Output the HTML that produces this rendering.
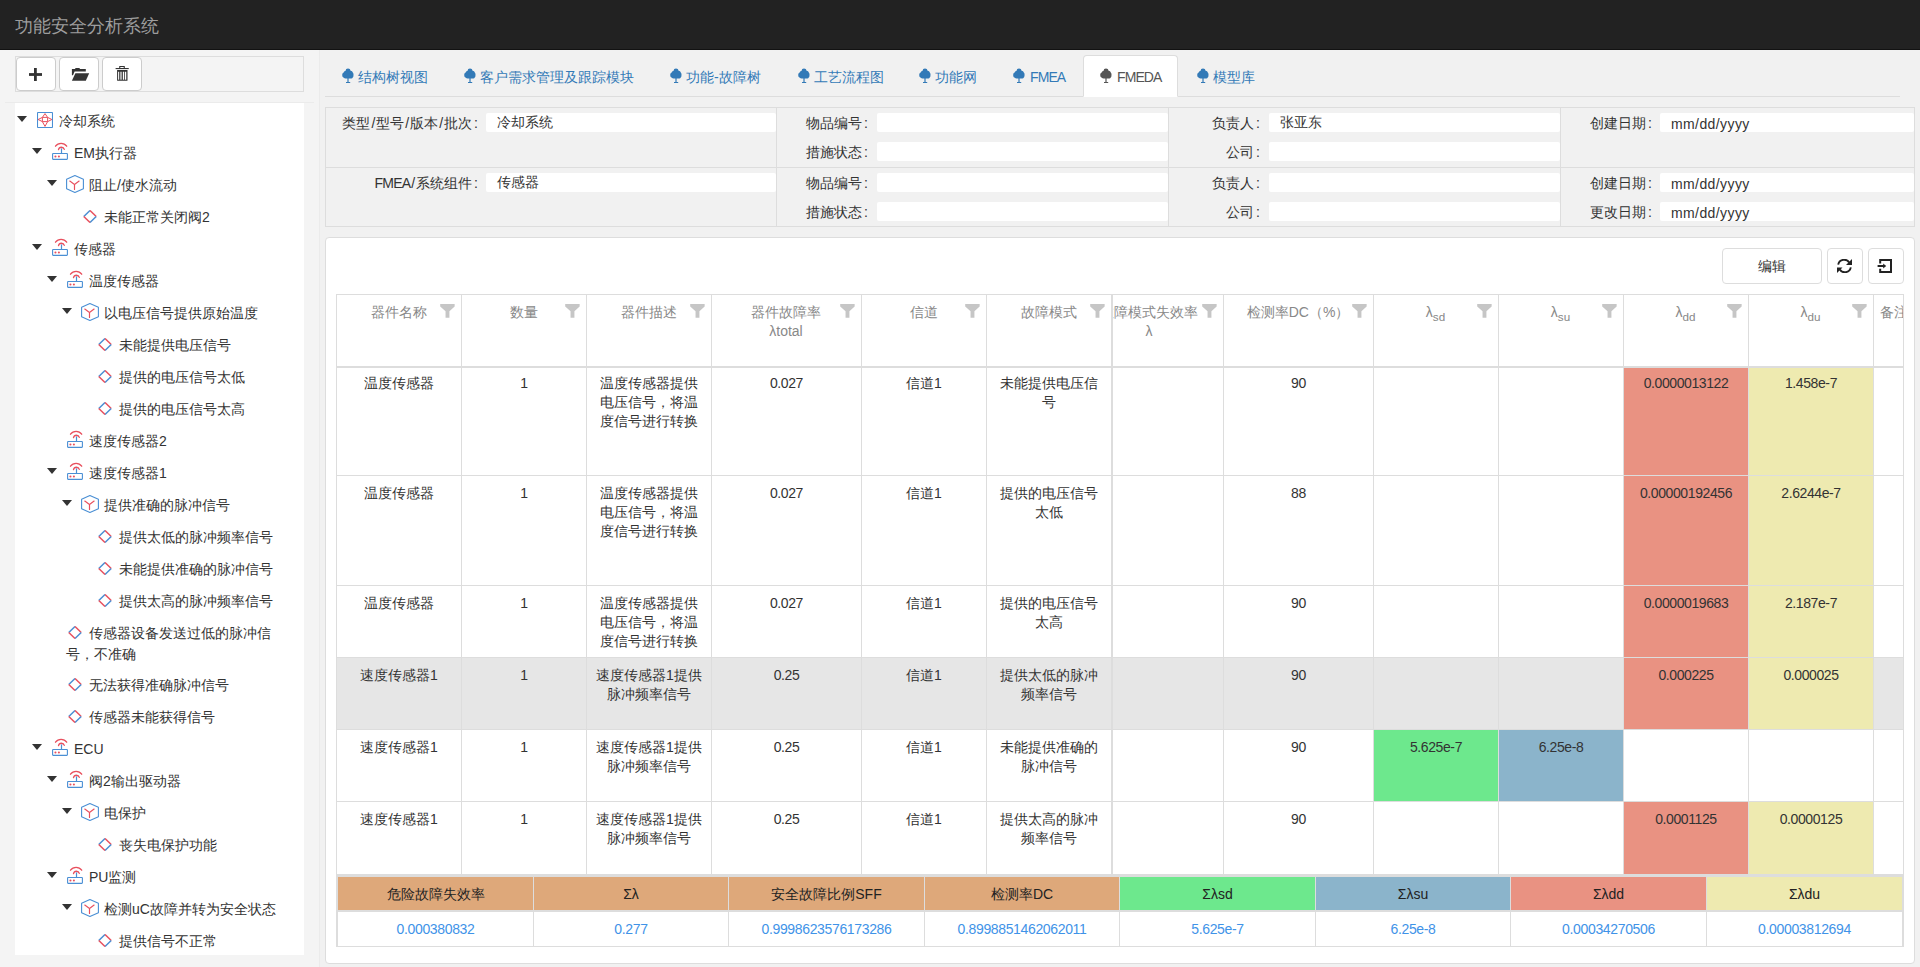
<!DOCTYPE html><html><head><meta charset="utf-8"><title>功能安全分析系统</title><style>
*{box-sizing:border-box;margin:0;padding:0}
html,body{width:1920px;height:967px;overflow:hidden;background:#f1f1f1;font-family:"Liberation Sans",sans-serif;font-size:14px;color:#333}
.a{position:absolute}
.hdr{left:0;top:0;width:1920px;height:50px;background:#222;border-bottom:1px solid #121212}
.brand{left:15px;top:16px;font-size:18px;line-height:20px;color:#9d9d9d;white-space:nowrap}
.lp{left:0;top:50px;width:320px;height:917px;background:#f4f4f4;border-right:1px solid #ebebeb}
.tb{left:15px;top:56px;width:289px;height:36px;border:1px solid #ddd;background:#f4f4f4}
.btn{top:57px;width:40px;height:34px;background:#fff;border:1px solid #ccc;border-radius:4px}
.tree{left:15px;top:103px;width:289px;height:852px;background:#fff}
.node{white-space:nowrap;line-height:20px;font-size:14px;color:#333}
.tabs{left:325px;top:96px;width:1575px;height:1px;background:#ddd}
.tab{top:55px;height:42px;color:#337ab7;white-space:nowrap;line-height:20px}
.form{left:325px;top:107px;width:1590px;height:120px;border:1px solid #ddd}
.lbl{line-height:20px;text-align:right;white-space:nowrap;color:#333}
.sl{margin:0 1px}.co{margin:0 0 0 2px}
.inp{height:19px;background:#fff;border-radius:2px}
.panel{left:325px;top:237px;width:1590px;height:727px;background:#fff;border:1px solid #ddd;border-radius:4px}
.hl{height:1px;background:#ddd}
.vl{width:1px;background:#ddd}
.cell{text-align:center;line-height:19px;overflow:hidden}
.th{color:#888;text-align:center;line-height:19px;white-space:nowrap}
</style></head><body>
<div class="a hdr"></div><div class="a brand">功能安全分析系统</div>
<div class="a lp"></div>
<div class="a tb"></div>
<div class="a btn" style="left:16px"></div>
<div class="a btn" style="left:59px"></div>
<div class="a btn" style="left:102px"></div>
<svg class="a" style="left:29px;top:68px" width="13" height="13" viewBox="0 0 13 13"><rect x="5" y="0" width="2.8" height="13" fill="#333"/><rect x="0" y="5.1" width="13" height="2.8" fill="#333"/></svg>
<svg class="a" style="left:71px;top:67px" width="19" height="15" viewBox="0 0 19 15"><path d="M0.9 2 H4 L4.6 1 H8.4 L9 2 H14.8 V4.5 H3.6 L2 8.2 H0.9 Z" fill="#333"/><path d="M4.4 6.2 H18.2 L14.8 13.7 H0.9 Z" fill="#333"/></svg>
<svg class="a" style="left:115px;top:65px" width="15" height="17" viewBox="0 0 15 17"><rect x="0.6" y="3" width="13.15" height="1.1" fill="#333"/><path d="M4.2 3 V1.2 Q4.2 0.9 4.5 0.9 H9.5 Q9.8 0.9 9.8 1.2 V3 H8.7 V2 H5.3 V3 Z" fill="#333"/><path d="M2.1 5.1 H12.5 V15.2 Q12.5 15.7 12 15.7 H2.6 Q2.1 15.7 2.1 15.2 Z" fill="#333"/><rect x="3.1" y="6.75" width="1.1" height="7.95" fill="#fff"/><rect x="5" y="6.75" width="2.1" height="7.95" fill="#aaa"/><rect x="7.9" y="6.75" width="1.3" height="7.95" fill="#fff"/><rect x="10" y="6.75" width="1.25" height="7.95" fill="#fff"/></svg>
<div class="a" style="left:5px;top:102px;width:309px;height:1px;background:#ebebeb"></div>
<div class="a tree"></div>
<svg class="a" style="left:17px;top:116px" width="10" height="6" viewBox="0 0 10 6"><path d="M0 0 H10 L5 6 Z" fill="#333"/></svg>
<svg class="a" style="left:37px;top:112px" width="16" height="16" viewBox="0 0 16 16"><rect x="0.5" y="0.5" width="15" height="15" rx="0.8" fill="none" stroke="#4a8fd4" stroke-width="1.1"/><path d="M8 1.6 L10.6 5.4 L14.9 7.5 L10.6 9.6 L8 14.4 L5.4 9.6 L1.1 7.5 L5.4 5.4 Z M5.4 5.4 H10.6 V9.6 H5.4 Z" fill="none" stroke="#e8505e" stroke-width="1" stroke-linejoin="round"/></svg>
<div class="a node" style="left:59px;top:111px">冷却系统</div>
<svg class="a" style="left:32px;top:148px" width="10" height="6" viewBox="0 0 10 6"><path d="M0 0 H10 L5 6 Z" fill="#333"/></svg>
<svg class="a" style="left:52px;top:142px" width="17" height="19" viewBox="0 0 17 19"><path d="M3.5 4.2 A6.9 6.9 0 0 1 14.7 4.2" fill="none" stroke="#e8505e" stroke-width="1.3" stroke-linecap="round"/><path d="M6.5 7.6 A3 3 0 0 1 12.3 7.4" fill="none" stroke="#e8505e" stroke-width="1.3" stroke-linecap="round"/><rect x="8.9" y="6.4" width="1.2" height="5" fill="#4a8fd4"/><rect x="0.6" y="11.5" width="14.8" height="5.9" rx="0.6" fill="none" stroke="#4a8fd4" stroke-width="1.1"/><circle cx="3.45" cy="14.45" r="1.05" fill="#e8505e"/><circle cx="6.9" cy="14.45" r="1.05" fill="#e8505e"/></svg>
<div class="a node" style="left:74px;top:143px">EM执行器</div>
<svg class="a" style="left:47px;top:180px" width="10" height="6" viewBox="0 0 10 6"><path d="M0 0 H10 L5 6 Z" fill="#333"/></svg>
<svg class="a" style="left:66px;top:175px" width="18" height="18" viewBox="0 0 18 18"><path d="M8.9 0.6 L17.4 4.3 V13.7 L8.9 17.4 L0.6 13.7 V4.3 Z" fill="none" stroke="#4a8fd4" stroke-width="1.1" stroke-linejoin="round"/><path d="M3.8 6.1 L8.5 9.4 L13.1 6.1 M8.5 9.4 V14.5" fill="none" stroke="#e8505e" stroke-width="1.2" stroke-linecap="round"/></svg>
<div class="a node" style="left:89px;top:175px">阻止/使水流动</div>
<svg class="a" style="left:83px;top:210px" width="14" height="14" viewBox="0 0 14 14"><path d="M0.8 6.5 L7 0.5" stroke="#4a8fd4" stroke-width="1.5"/><path d="M7 0.5 L13.2 6.5" stroke="#e8505e" stroke-width="1.5"/><path d="M13.2 6.5 L7 12.5" stroke="#4a8fd4" stroke-width="1.5"/><path d="M7 12.5 L0.8 6.5" stroke="#e8505e" stroke-width="1.5"/></svg>
<div class="a node" style="left:104px;top:207px">未能正常关闭阀2</div>
<svg class="a" style="left:32px;top:244px" width="10" height="6" viewBox="0 0 10 6"><path d="M0 0 H10 L5 6 Z" fill="#333"/></svg>
<svg class="a" style="left:52px;top:238px" width="17" height="19" viewBox="0 0 17 19"><path d="M3.5 4.2 A6.9 6.9 0 0 1 14.7 4.2" fill="none" stroke="#e8505e" stroke-width="1.3" stroke-linecap="round"/><path d="M6.5 7.6 A3 3 0 0 1 12.3 7.4" fill="none" stroke="#e8505e" stroke-width="1.3" stroke-linecap="round"/><rect x="8.9" y="6.4" width="1.2" height="5" fill="#4a8fd4"/><rect x="0.6" y="11.5" width="14.8" height="5.9" rx="0.6" fill="none" stroke="#4a8fd4" stroke-width="1.1"/><circle cx="3.45" cy="14.45" r="1.05" fill="#e8505e"/><circle cx="6.9" cy="14.45" r="1.05" fill="#e8505e"/></svg>
<div class="a node" style="left:74px;top:239px">传感器</div>
<svg class="a" style="left:47px;top:276px" width="10" height="6" viewBox="0 0 10 6"><path d="M0 0 H10 L5 6 Z" fill="#333"/></svg>
<svg class="a" style="left:67px;top:270px" width="17" height="19" viewBox="0 0 17 19"><path d="M3.5 4.2 A6.9 6.9 0 0 1 14.7 4.2" fill="none" stroke="#e8505e" stroke-width="1.3" stroke-linecap="round"/><path d="M6.5 7.6 A3 3 0 0 1 12.3 7.4" fill="none" stroke="#e8505e" stroke-width="1.3" stroke-linecap="round"/><rect x="8.9" y="6.4" width="1.2" height="5" fill="#4a8fd4"/><rect x="0.6" y="11.5" width="14.8" height="5.9" rx="0.6" fill="none" stroke="#4a8fd4" stroke-width="1.1"/><circle cx="3.45" cy="14.45" r="1.05" fill="#e8505e"/><circle cx="6.9" cy="14.45" r="1.05" fill="#e8505e"/></svg>
<div class="a node" style="left:89px;top:271px">温度传感器</div>
<svg class="a" style="left:62px;top:308px" width="10" height="6" viewBox="0 0 10 6"><path d="M0 0 H10 L5 6 Z" fill="#333"/></svg>
<svg class="a" style="left:81px;top:303px" width="18" height="18" viewBox="0 0 18 18"><path d="M8.9 0.6 L17.4 4.3 V13.7 L8.9 17.4 L0.6 13.7 V4.3 Z" fill="none" stroke="#4a8fd4" stroke-width="1.1" stroke-linejoin="round"/><path d="M3.8 6.1 L8.5 9.4 L13.1 6.1 M8.5 9.4 V14.5" fill="none" stroke="#e8505e" stroke-width="1.2" stroke-linecap="round"/></svg>
<div class="a node" style="left:104px;top:303px">以电压信号提供原始温度</div>
<svg class="a" style="left:98px;top:338px" width="14" height="14" viewBox="0 0 14 14"><path d="M0.8 6.5 L7 0.5" stroke="#4a8fd4" stroke-width="1.5"/><path d="M7 0.5 L13.2 6.5" stroke="#e8505e" stroke-width="1.5"/><path d="M13.2 6.5 L7 12.5" stroke="#4a8fd4" stroke-width="1.5"/><path d="M7 12.5 L0.8 6.5" stroke="#e8505e" stroke-width="1.5"/></svg>
<div class="a node" style="left:119px;top:335px">未能提供电压信号</div>
<svg class="a" style="left:98px;top:370px" width="14" height="14" viewBox="0 0 14 14"><path d="M0.8 6.5 L7 0.5" stroke="#4a8fd4" stroke-width="1.5"/><path d="M7 0.5 L13.2 6.5" stroke="#e8505e" stroke-width="1.5"/><path d="M13.2 6.5 L7 12.5" stroke="#4a8fd4" stroke-width="1.5"/><path d="M7 12.5 L0.8 6.5" stroke="#e8505e" stroke-width="1.5"/></svg>
<div class="a node" style="left:119px;top:367px">提供的电压信号太低</div>
<svg class="a" style="left:98px;top:402px" width="14" height="14" viewBox="0 0 14 14"><path d="M0.8 6.5 L7 0.5" stroke="#4a8fd4" stroke-width="1.5"/><path d="M7 0.5 L13.2 6.5" stroke="#e8505e" stroke-width="1.5"/><path d="M13.2 6.5 L7 12.5" stroke="#4a8fd4" stroke-width="1.5"/><path d="M7 12.5 L0.8 6.5" stroke="#e8505e" stroke-width="1.5"/></svg>
<div class="a node" style="left:119px;top:399px">提供的电压信号太高</div>
<svg class="a" style="left:67px;top:430px" width="17" height="19" viewBox="0 0 17 19"><path d="M3.5 4.2 A6.9 6.9 0 0 1 14.7 4.2" fill="none" stroke="#e8505e" stroke-width="1.3" stroke-linecap="round"/><path d="M6.5 7.6 A3 3 0 0 1 12.3 7.4" fill="none" stroke="#e8505e" stroke-width="1.3" stroke-linecap="round"/><rect x="8.9" y="6.4" width="1.2" height="5" fill="#4a8fd4"/><rect x="0.6" y="11.5" width="14.8" height="5.9" rx="0.6" fill="none" stroke="#4a8fd4" stroke-width="1.1"/><circle cx="3.45" cy="14.45" r="1.05" fill="#e8505e"/><circle cx="6.9" cy="14.45" r="1.05" fill="#e8505e"/></svg>
<div class="a node" style="left:89px;top:431px">速度传感器2</div>
<svg class="a" style="left:47px;top:468px" width="10" height="6" viewBox="0 0 10 6"><path d="M0 0 H10 L5 6 Z" fill="#333"/></svg>
<svg class="a" style="left:67px;top:462px" width="17" height="19" viewBox="0 0 17 19"><path d="M3.5 4.2 A6.9 6.9 0 0 1 14.7 4.2" fill="none" stroke="#e8505e" stroke-width="1.3" stroke-linecap="round"/><path d="M6.5 7.6 A3 3 0 0 1 12.3 7.4" fill="none" stroke="#e8505e" stroke-width="1.3" stroke-linecap="round"/><rect x="8.9" y="6.4" width="1.2" height="5" fill="#4a8fd4"/><rect x="0.6" y="11.5" width="14.8" height="5.9" rx="0.6" fill="none" stroke="#4a8fd4" stroke-width="1.1"/><circle cx="3.45" cy="14.45" r="1.05" fill="#e8505e"/><circle cx="6.9" cy="14.45" r="1.05" fill="#e8505e"/></svg>
<div class="a node" style="left:89px;top:463px">速度传感器1</div>
<svg class="a" style="left:62px;top:500px" width="10" height="6" viewBox="0 0 10 6"><path d="M0 0 H10 L5 6 Z" fill="#333"/></svg>
<svg class="a" style="left:81px;top:495px" width="18" height="18" viewBox="0 0 18 18"><path d="M8.9 0.6 L17.4 4.3 V13.7 L8.9 17.4 L0.6 13.7 V4.3 Z" fill="none" stroke="#4a8fd4" stroke-width="1.1" stroke-linejoin="round"/><path d="M3.8 6.1 L8.5 9.4 L13.1 6.1 M8.5 9.4 V14.5" fill="none" stroke="#e8505e" stroke-width="1.2" stroke-linecap="round"/></svg>
<div class="a node" style="left:104px;top:495px">提供准确的脉冲信号</div>
<svg class="a" style="left:98px;top:530px" width="14" height="14" viewBox="0 0 14 14"><path d="M0.8 6.5 L7 0.5" stroke="#4a8fd4" stroke-width="1.5"/><path d="M7 0.5 L13.2 6.5" stroke="#e8505e" stroke-width="1.5"/><path d="M13.2 6.5 L7 12.5" stroke="#4a8fd4" stroke-width="1.5"/><path d="M7 12.5 L0.8 6.5" stroke="#e8505e" stroke-width="1.5"/></svg>
<div class="a node" style="left:119px;top:527px">提供太低的脉冲频率信号</div>
<svg class="a" style="left:98px;top:562px" width="14" height="14" viewBox="0 0 14 14"><path d="M0.8 6.5 L7 0.5" stroke="#4a8fd4" stroke-width="1.5"/><path d="M7 0.5 L13.2 6.5" stroke="#e8505e" stroke-width="1.5"/><path d="M13.2 6.5 L7 12.5" stroke="#4a8fd4" stroke-width="1.5"/><path d="M7 12.5 L0.8 6.5" stroke="#e8505e" stroke-width="1.5"/></svg>
<div class="a node" style="left:119px;top:559px">未能提供准确的脉冲信号</div>
<svg class="a" style="left:98px;top:594px" width="14" height="14" viewBox="0 0 14 14"><path d="M0.8 6.5 L7 0.5" stroke="#4a8fd4" stroke-width="1.5"/><path d="M7 0.5 L13.2 6.5" stroke="#e8505e" stroke-width="1.5"/><path d="M13.2 6.5 L7 12.5" stroke="#4a8fd4" stroke-width="1.5"/><path d="M7 12.5 L0.8 6.5" stroke="#e8505e" stroke-width="1.5"/></svg>
<div class="a node" style="left:119px;top:591px">提供太高的脉冲频率信号</div>
<svg class="a" style="left:68px;top:626px" width="14" height="14" viewBox="0 0 14 14"><path d="M0.8 6.5 L7 0.5" stroke="#4a8fd4" stroke-width="1.5"/><path d="M7 0.5 L13.2 6.5" stroke="#e8505e" stroke-width="1.5"/><path d="M13.2 6.5 L7 12.5" stroke="#4a8fd4" stroke-width="1.5"/><path d="M7 12.5 L0.8 6.5" stroke="#e8505e" stroke-width="1.5"/></svg>
<div class="a node" style="left:89px;top:623px">传感器设备发送过低的脉冲信</div>
<div class="a node" style="left:66px;top:644px">号，不准确</div>
<svg class="a" style="left:68px;top:678px" width="14" height="14" viewBox="0 0 14 14"><path d="M0.8 6.5 L7 0.5" stroke="#4a8fd4" stroke-width="1.5"/><path d="M7 0.5 L13.2 6.5" stroke="#e8505e" stroke-width="1.5"/><path d="M13.2 6.5 L7 12.5" stroke="#4a8fd4" stroke-width="1.5"/><path d="M7 12.5 L0.8 6.5" stroke="#e8505e" stroke-width="1.5"/></svg>
<div class="a node" style="left:89px;top:675px">无法获得准确脉冲信号</div>
<svg class="a" style="left:68px;top:710px" width="14" height="14" viewBox="0 0 14 14"><path d="M0.8 6.5 L7 0.5" stroke="#4a8fd4" stroke-width="1.5"/><path d="M7 0.5 L13.2 6.5" stroke="#e8505e" stroke-width="1.5"/><path d="M13.2 6.5 L7 12.5" stroke="#4a8fd4" stroke-width="1.5"/><path d="M7 12.5 L0.8 6.5" stroke="#e8505e" stroke-width="1.5"/></svg>
<div class="a node" style="left:89px;top:707px">传感器未能获得信号</div>
<svg class="a" style="left:32px;top:744px" width="10" height="6" viewBox="0 0 10 6"><path d="M0 0 H10 L5 6 Z" fill="#333"/></svg>
<svg class="a" style="left:52px;top:738px" width="17" height="19" viewBox="0 0 17 19"><path d="M3.5 4.2 A6.9 6.9 0 0 1 14.7 4.2" fill="none" stroke="#e8505e" stroke-width="1.3" stroke-linecap="round"/><path d="M6.5 7.6 A3 3 0 0 1 12.3 7.4" fill="none" stroke="#e8505e" stroke-width="1.3" stroke-linecap="round"/><rect x="8.9" y="6.4" width="1.2" height="5" fill="#4a8fd4"/><rect x="0.6" y="11.5" width="14.8" height="5.9" rx="0.6" fill="none" stroke="#4a8fd4" stroke-width="1.1"/><circle cx="3.45" cy="14.45" r="1.05" fill="#e8505e"/><circle cx="6.9" cy="14.45" r="1.05" fill="#e8505e"/></svg>
<div class="a node" style="left:74px;top:739px">ECU</div>
<svg class="a" style="left:47px;top:776px" width="10" height="6" viewBox="0 0 10 6"><path d="M0 0 H10 L5 6 Z" fill="#333"/></svg>
<svg class="a" style="left:67px;top:770px" width="17" height="19" viewBox="0 0 17 19"><path d="M3.5 4.2 A6.9 6.9 0 0 1 14.7 4.2" fill="none" stroke="#e8505e" stroke-width="1.3" stroke-linecap="round"/><path d="M6.5 7.6 A3 3 0 0 1 12.3 7.4" fill="none" stroke="#e8505e" stroke-width="1.3" stroke-linecap="round"/><rect x="8.9" y="6.4" width="1.2" height="5" fill="#4a8fd4"/><rect x="0.6" y="11.5" width="14.8" height="5.9" rx="0.6" fill="none" stroke="#4a8fd4" stroke-width="1.1"/><circle cx="3.45" cy="14.45" r="1.05" fill="#e8505e"/><circle cx="6.9" cy="14.45" r="1.05" fill="#e8505e"/></svg>
<div class="a node" style="left:89px;top:771px">阀2输出驱动器</div>
<svg class="a" style="left:62px;top:808px" width="10" height="6" viewBox="0 0 10 6"><path d="M0 0 H10 L5 6 Z" fill="#333"/></svg>
<svg class="a" style="left:81px;top:803px" width="18" height="18" viewBox="0 0 18 18"><path d="M8.9 0.6 L17.4 4.3 V13.7 L8.9 17.4 L0.6 13.7 V4.3 Z" fill="none" stroke="#4a8fd4" stroke-width="1.1" stroke-linejoin="round"/><path d="M3.8 6.1 L8.5 9.4 L13.1 6.1 M8.5 9.4 V14.5" fill="none" stroke="#e8505e" stroke-width="1.2" stroke-linecap="round"/></svg>
<div class="a node" style="left:104px;top:803px">电保护</div>
<svg class="a" style="left:98px;top:838px" width="14" height="14" viewBox="0 0 14 14"><path d="M0.8 6.5 L7 0.5" stroke="#4a8fd4" stroke-width="1.5"/><path d="M7 0.5 L13.2 6.5" stroke="#e8505e" stroke-width="1.5"/><path d="M13.2 6.5 L7 12.5" stroke="#4a8fd4" stroke-width="1.5"/><path d="M7 12.5 L0.8 6.5" stroke="#e8505e" stroke-width="1.5"/></svg>
<div class="a node" style="left:119px;top:835px">丧失电保护功能</div>
<svg class="a" style="left:47px;top:872px" width="10" height="6" viewBox="0 0 10 6"><path d="M0 0 H10 L5 6 Z" fill="#333"/></svg>
<svg class="a" style="left:67px;top:866px" width="17" height="19" viewBox="0 0 17 19"><path d="M3.5 4.2 A6.9 6.9 0 0 1 14.7 4.2" fill="none" stroke="#e8505e" stroke-width="1.3" stroke-linecap="round"/><path d="M6.5 7.6 A3 3 0 0 1 12.3 7.4" fill="none" stroke="#e8505e" stroke-width="1.3" stroke-linecap="round"/><rect x="8.9" y="6.4" width="1.2" height="5" fill="#4a8fd4"/><rect x="0.6" y="11.5" width="14.8" height="5.9" rx="0.6" fill="none" stroke="#4a8fd4" stroke-width="1.1"/><circle cx="3.45" cy="14.45" r="1.05" fill="#e8505e"/><circle cx="6.9" cy="14.45" r="1.05" fill="#e8505e"/></svg>
<div class="a node" style="left:89px;top:867px">PU监测</div>
<svg class="a" style="left:62px;top:904px" width="10" height="6" viewBox="0 0 10 6"><path d="M0 0 H10 L5 6 Z" fill="#333"/></svg>
<svg class="a" style="left:81px;top:899px" width="18" height="18" viewBox="0 0 18 18"><path d="M8.9 0.6 L17.4 4.3 V13.7 L8.9 17.4 L0.6 13.7 V4.3 Z" fill="none" stroke="#4a8fd4" stroke-width="1.1" stroke-linejoin="round"/><path d="M3.8 6.1 L8.5 9.4 L13.1 6.1 M8.5 9.4 V14.5" fill="none" stroke="#e8505e" stroke-width="1.2" stroke-linecap="round"/></svg>
<div class="a node" style="left:104px;top:899px">检测uC故障并转为安全状态</div>
<svg class="a" style="left:98px;top:934px" width="14" height="14" viewBox="0 0 14 14"><path d="M0.8 6.5 L7 0.5" stroke="#4a8fd4" stroke-width="1.5"/><path d="M7 0.5 L13.2 6.5" stroke="#e8505e" stroke-width="1.5"/><path d="M13.2 6.5 L7 12.5" stroke="#4a8fd4" stroke-width="1.5"/><path d="M7 12.5 L0.8 6.5" stroke="#e8505e" stroke-width="1.5"/></svg>
<div class="a node" style="left:119px;top:931px">提供信号不正常</div>
<div class="a tabs"></div>
<div class="a" style="left:1083px;top:55px;width:95px;height:42px;background:#fff;border:1px solid #ddd;border-bottom-color:transparent;border-radius:4px 4px 0 0"></div>
<svg class="a" style="left:342px;top:68px" width="13" height="16" viewBox="0 0 13 16"><path d="M4.2 1 Q6 0.2 7.8 1 L8.6 2.8 Q10.4 3 10.8 4.4 Q11.8 5.4 11.5 7 Q11.8 9 10.2 10.2 Q9 10.8 7.6 10.5 H6.6 V14 H8.2 V15 H4 V14 H5.4 V10.5 H4.4 Q2.6 10.8 1.8 9.8 Q0 9 0.2 7 Q0 5.4 1.6 4.6 Q2.4 3 3.6 2.8 Z" fill="#337ab7"/></svg>
<div class="a tab" style="left:358px;top:67px;height:20px;color:#337ab7">结构树视图</div>
<svg class="a" style="left:464px;top:68px" width="13" height="16" viewBox="0 0 13 16"><path d="M4.2 1 Q6 0.2 7.8 1 L8.6 2.8 Q10.4 3 10.8 4.4 Q11.8 5.4 11.5 7 Q11.8 9 10.2 10.2 Q9 10.8 7.6 10.5 H6.6 V14 H8.2 V15 H4 V14 H5.4 V10.5 H4.4 Q2.6 10.8 1.8 9.8 Q0 9 0.2 7 Q0 5.4 1.6 4.6 Q2.4 3 3.6 2.8 Z" fill="#337ab7"/></svg>
<div class="a tab" style="left:480px;top:67px;height:20px;color:#337ab7">客户需求管理及跟踪模块</div>
<svg class="a" style="left:670px;top:68px" width="13" height="16" viewBox="0 0 13 16"><path d="M4.2 1 Q6 0.2 7.8 1 L8.6 2.8 Q10.4 3 10.8 4.4 Q11.8 5.4 11.5 7 Q11.8 9 10.2 10.2 Q9 10.8 7.6 10.5 H6.6 V14 H8.2 V15 H4 V14 H5.4 V10.5 H4.4 Q2.6 10.8 1.8 9.8 Q0 9 0.2 7 Q0 5.4 1.6 4.6 Q2.4 3 3.6 2.8 Z" fill="#337ab7"/></svg>
<div class="a tab" style="left:686px;top:67px;height:20px;color:#337ab7">功能-故障树</div>
<svg class="a" style="left:798px;top:68px" width="13" height="16" viewBox="0 0 13 16"><path d="M4.2 1 Q6 0.2 7.8 1 L8.6 2.8 Q10.4 3 10.8 4.4 Q11.8 5.4 11.5 7 Q11.8 9 10.2 10.2 Q9 10.8 7.6 10.5 H6.6 V14 H8.2 V15 H4 V14 H5.4 V10.5 H4.4 Q2.6 10.8 1.8 9.8 Q0 9 0.2 7 Q0 5.4 1.6 4.6 Q2.4 3 3.6 2.8 Z" fill="#337ab7"/></svg>
<div class="a tab" style="left:814px;top:67px;height:20px;color:#337ab7">工艺流程图</div>
<svg class="a" style="left:919px;top:68px" width="13" height="16" viewBox="0 0 13 16"><path d="M4.2 1 Q6 0.2 7.8 1 L8.6 2.8 Q10.4 3 10.8 4.4 Q11.8 5.4 11.5 7 Q11.8 9 10.2 10.2 Q9 10.8 7.6 10.5 H6.6 V14 H8.2 V15 H4 V14 H5.4 V10.5 H4.4 Q2.6 10.8 1.8 9.8 Q0 9 0.2 7 Q0 5.4 1.6 4.6 Q2.4 3 3.6 2.8 Z" fill="#337ab7"/></svg>
<div class="a tab" style="left:935px;top:67px;height:20px;color:#337ab7">功能网</div>
<svg class="a" style="left:1013px;top:68px" width="13" height="16" viewBox="0 0 13 16"><path d="M4.2 1 Q6 0.2 7.8 1 L8.6 2.8 Q10.4 3 10.8 4.4 Q11.8 5.4 11.5 7 Q11.8 9 10.2 10.2 Q9 10.8 7.6 10.5 H6.6 V14 H8.2 V15 H4 V14 H5.4 V10.5 H4.4 Q2.6 10.8 1.8 9.8 Q0 9 0.2 7 Q0 5.4 1.6 4.6 Q2.4 3 3.6 2.8 Z" fill="#337ab7"/></svg>
<div class="a tab" style="left:1030px;top:67px;height:20px;color:#337ab7;letter-spacing:-0.9px">FMEA</div>
<svg class="a" style="left:1100px;top:68px" width="13" height="16" viewBox="0 0 13 16"><path d="M4.2 1 Q6 0.2 7.8 1 L8.6 2.8 Q10.4 3 10.8 4.4 Q11.8 5.4 11.5 7 Q11.8 9 10.2 10.2 Q9 10.8 7.6 10.5 H6.6 V14 H8.2 V15 H4 V14 H5.4 V10.5 H4.4 Q2.6 10.8 1.8 9.8 Q0 9 0.2 7 Q0 5.4 1.6 4.6 Q2.4 3 3.6 2.8 Z" fill="#555"/></svg>
<div class="a tab" style="left:1117px;top:67px;height:20px;color:#555;letter-spacing:-0.9px">FMEDA</div>
<svg class="a" style="left:1197px;top:68px" width="13" height="16" viewBox="0 0 13 16"><path d="M4.2 1 Q6 0.2 7.8 1 L8.6 2.8 Q10.4 3 10.8 4.4 Q11.8 5.4 11.5 7 Q11.8 9 10.2 10.2 Q9 10.8 7.6 10.5 H6.6 V14 H8.2 V15 H4 V14 H5.4 V10.5 H4.4 Q2.6 10.8 1.8 9.8 Q0 9 0.2 7 Q0 5.4 1.6 4.6 Q2.4 3 3.6 2.8 Z" fill="#337ab7"/></svg>
<div class="a tab" style="left:1213px;top:67px;height:20px;color:#337ab7">模型库</div>
<div class="a form"></div>
<div class="a hl" style="left:326px;top:167px;width:1588px"></div>
<div class="a vl" style="left:776px;top:108px;height:118px"></div>
<div class="a vl" style="left:1168px;top:108px;height:118px"></div>
<div class="a vl" style="left:1560px;top:108px;height:118px"></div>
<div class="a lbl" style="right:1442px;top:113px">类型<span class="sl">/</span>型号<span class="sl">/</span>版本<span class="sl">/</span>批次<span class="co">:</span></div>
<div class="a inp" style="left:486px;top:113px;width:290px"></div>
<div class="a node" style="left:497px;top:112px">冷却系统</div>
<div class="a lbl" style="right:1052px;top:113px">物品编号<span class="co">:</span></div>
<div class="a inp" style="left:877px;top:113px;width:291px"></div>
<div class="a lbl" style="right:1052px;top:142px">措施状态<span class="co">:</span></div>
<div class="a inp" style="left:877px;top:142px;width:291px"></div>
<div class="a lbl" style="right:660px;top:113px">负责人<span class="co">:</span></div>
<div class="a inp" style="left:1269px;top:113px;width:291px"></div>
<div class="a node" style="left:1280px;top:112px">张亚东</div>
<div class="a lbl" style="right:660px;top:142px">公司<span class="co">:</span></div>
<div class="a inp" style="left:1269px;top:142px;width:291px"></div>
<div class="a lbl" style="right:268px;top:113px">创建日期<span class="co">:</span></div>
<div class="a inp" style="left:1660px;top:113px;width:254px"></div>
<div class="a node" style="left:1671px;top:114px;letter-spacing:0.4px">mm/dd/yyyy</div>
<div class="a lbl" style="right:1442px;top:173px"><span style="letter-spacing:-0.8px">FMEA</span><span class="sl">/</span>系统组件<span class="co">:</span></div>
<div class="a inp" style="left:486px;top:173px;width:290px"></div>
<div class="a node" style="left:497px;top:172px">传感器</div>
<div class="a lbl" style="right:1052px;top:173px">物品编号<span class="co">:</span></div>
<div class="a inp" style="left:877px;top:173px;width:291px"></div>
<div class="a lbl" style="right:1052px;top:202px">措施状态<span class="co">:</span></div>
<div class="a inp" style="left:877px;top:202px;width:291px"></div>
<div class="a lbl" style="right:660px;top:173px">负责人<span class="co">:</span></div>
<div class="a inp" style="left:1269px;top:173px;width:291px"></div>
<div class="a lbl" style="right:660px;top:202px">公司<span class="co">:</span></div>
<div class="a inp" style="left:1269px;top:202px;width:291px"></div>
<div class="a lbl" style="right:268px;top:173px">创建日期<span class="co">:</span></div>
<div class="a inp" style="left:1660px;top:173px;width:254px"></div>
<div class="a node" style="left:1671px;top:174px;letter-spacing:0.4px">mm/dd/yyyy</div>
<div class="a lbl" style="right:268px;top:202px">更改日期<span class="co">:</span></div>
<div class="a inp" style="left:1660px;top:202px;width:254px"></div>
<div class="a node" style="left:1671px;top:203px;letter-spacing:0.4px">mm/dd/yyyy</div>
<div class="a panel"></div>
<div class="a" style="left:1722px;top:248px;width:100px;height:36px;border:1px solid #ddd;border-radius:4px;background:#fff"></div>
<div class="a node" style="left:1758px;top:256px">编辑</div>
<div class="a" style="left:1827px;top:248px;width:36px;height:36px;border:1px solid #ddd;border-radius:4px;background:#fff"></div>
<div class="a" style="left:1868px;top:248px;width:36px;height:36px;border:1px solid #ddd;border-radius:4px;background:#fff"></div>
<svg class="a" style="left:1837px;top:259px" width="15" height="14" viewBox="0 0 15 14"><path d="M1.2 5.6 A6 6 0 0 1 12.2 3.6" fill="none" stroke="#222" stroke-width="1.9"/><path d="M15 0 V6 H9 Z" fill="#222"/><path d="M13.8 8.4 A6 6 0 0 1 2.8 10.4" fill="none" stroke="#222" stroke-width="1.9"/><path d="M0 14 V8.5 H5.5 Z" fill="#222"/></svg>
<svg class="a" style="left:1877px;top:259px" width="16" height="14" viewBox="0 0 16 14"><path d="M2.2 0 H15 V14 H2.2 V9.7 H4.2 V12 H13 V2 H4.2 V4.6 H2.2 Z" fill="#222"/><path d="M0.6 6 H6.2 V4.4 L9.2 7 L6.2 9.6 V8 H0.6 Z" fill="#222"/></svg>
<div class="a" style="left:337px;top:658px;width:1566px;height:71px;background:#e6e6e6"></div>
<div class="a" style="left:1624px;top:368px;width:124px;height:107px;background:rgb(233,146,130)"></div>
<div class="a" style="left:1749px;top:368px;width:124px;height:107px;background:rgb(238,234,176)"></div>
<div class="a" style="left:1624px;top:476px;width:124px;height:109px;background:rgb(233,146,130)"></div>
<div class="a" style="left:1749px;top:476px;width:124px;height:109px;background:rgb(238,234,176)"></div>
<div class="a" style="left:1624px;top:586px;width:124px;height:71px;background:rgb(233,146,130)"></div>
<div class="a" style="left:1749px;top:586px;width:124px;height:71px;background:rgb(238,234,176)"></div>
<div class="a" style="left:1624px;top:658px;width:124px;height:71px;background:rgb(233,146,130)"></div>
<div class="a" style="left:1749px;top:658px;width:124px;height:71px;background:rgb(238,234,176)"></div>
<div class="a" style="left:1624px;top:802px;width:124px;height:72px;background:rgb(233,146,130)"></div>
<div class="a" style="left:1749px;top:802px;width:124px;height:72px;background:rgb(238,234,176)"></div>
<div class="a" style="left:1374px;top:730px;width:124px;height:71px;background:rgb(109,232,141)"></div>
<div class="a" style="left:1499px;top:730px;width:124px;height:71px;background:rgb(139,180,203)"></div>
<div class="a hl" style="left:336px;top:294px;width:1568px"></div>
<div class="a" style="left:336px;top:366px;width:1568px;height:2px;background:#ddd"></div>
<div class="a hl" style="left:336px;top:475px;width:1568px"></div>
<div class="a hl" style="left:336px;top:585px;width:1568px"></div>
<div class="a hl" style="left:336px;top:657px;width:1568px"></div>
<div class="a hl" style="left:336px;top:729px;width:1568px"></div>
<div class="a hl" style="left:336px;top:801px;width:1568px"></div>
<div class="a" style="left:336px;top:874px;width:1568px;height:3px;background:#ddd"></div>
<div class="a vl" style="left:336px;top:294px;height:580px"></div>
<div class="a vl" style="left:461px;top:294px;height:580px"></div>
<div class="a vl" style="left:586px;top:294px;height:580px"></div>
<div class="a vl" style="left:711px;top:294px;height:580px"></div>
<div class="a vl" style="left:861px;top:294px;height:580px"></div>
<div class="a vl" style="left:986px;top:294px;height:580px"></div>
<div class="a vl" style="left:1111px;top:294px;height:580px"></div>
<div class="a vl" style="left:1223px;top:294px;height:580px"></div>
<div class="a vl" style="left:1373px;top:294px;height:580px"></div>
<div class="a vl" style="left:1498px;top:294px;height:580px"></div>
<div class="a vl" style="left:1623px;top:294px;height:580px"></div>
<div class="a vl" style="left:1748px;top:294px;height:580px"></div>
<div class="a vl" style="left:1873px;top:294px;height:580px"></div>
<div class="a vl" style="left:1903px;top:294px;height:580px"></div>
<div class="a vl" style="left:1112px;top:294px;height:580px"></div>
<div class="a th" style="left:336px;top:303px;width:125px">器件名称</div>
<svg class="a" style="left:439px;top:304px" width="17" height="14" viewBox="0 0 17 14"><path d="M1.2 0 H15.65 V2.6 L10.42 7.2 V13.7 H6.55 V7.2 L1.2 2.6 Z" fill="#c6c6c6"/></svg>
<div class="a th" style="left:461px;top:303px;width:125px">数量</div>
<svg class="a" style="left:564px;top:304px" width="17" height="14" viewBox="0 0 17 14"><path d="M1.2 0 H15.65 V2.6 L10.42 7.2 V13.7 H6.55 V7.2 L1.2 2.6 Z" fill="#c6c6c6"/></svg>
<div class="a th" style="left:586px;top:303px;width:125px">器件描述</div>
<svg class="a" style="left:689px;top:304px" width="17" height="14" viewBox="0 0 17 14"><path d="M1.2 0 H15.65 V2.6 L10.42 7.2 V13.7 H6.55 V7.2 L1.2 2.6 Z" fill="#c6c6c6"/></svg>
<div class="a th" style="left:711px;top:303px;width:150px">器件故障率<br>λtotal</div>
<svg class="a" style="left:839px;top:304px" width="17" height="14" viewBox="0 0 17 14"><path d="M1.2 0 H15.65 V2.6 L10.42 7.2 V13.7 H6.55 V7.2 L1.2 2.6 Z" fill="#c6c6c6"/></svg>
<div class="a th" style="left:861px;top:303px;width:125px">信道</div>
<svg class="a" style="left:964px;top:304px" width="17" height="14" viewBox="0 0 17 14"><path d="M1.2 0 H15.65 V2.6 L10.42 7.2 V13.7 H6.55 V7.2 L1.2 2.6 Z" fill="#c6c6c6"/></svg>
<div class="a th" style="left:986px;top:303px;width:125px">故障模式</div>
<svg class="a" style="left:1089px;top:304px" width="17" height="14" viewBox="0 0 17 14"><path d="M1.2 0 H15.65 V2.6 L10.42 7.2 V13.7 H6.55 V7.2 L1.2 2.6 Z" fill="#c6c6c6"/></svg>
<div class="a" style="left:1113px;top:303px;width:110px;height:40px;overflow:hidden"><div class="a th" style="left:-39px;top:0;width:150px">故障模式失效率<br>λ</div></div>
<svg class="a" style="left:1201px;top:304px" width="17" height="14" viewBox="0 0 17 14"><path d="M1.2 0 H15.65 V2.6 L10.42 7.2 V13.7 H6.55 V7.2 L1.2 2.6 Z" fill="#c6c6c6"/></svg>
<div class="a th" style="left:1223px;top:303px;width:150px">检测率DC（%）</div>
<svg class="a" style="left:1351px;top:304px" width="17" height="14" viewBox="0 0 17 14"><path d="M1.2 0 H15.65 V2.6 L10.42 7.2 V13.7 H6.55 V7.2 L1.2 2.6 Z" fill="#c6c6c6"/></svg>
<div class="a th" style="left:1373px;top:303px;width:125px">λ<sub>sd</sub></div>
<svg class="a" style="left:1476px;top:304px" width="17" height="14" viewBox="0 0 17 14"><path d="M1.2 0 H15.65 V2.6 L10.42 7.2 V13.7 H6.55 V7.2 L1.2 2.6 Z" fill="#c6c6c6"/></svg>
<div class="a th" style="left:1498px;top:303px;width:125px">λ<sub>su</sub></div>
<svg class="a" style="left:1601px;top:304px" width="17" height="14" viewBox="0 0 17 14"><path d="M1.2 0 H15.65 V2.6 L10.42 7.2 V13.7 H6.55 V7.2 L1.2 2.6 Z" fill="#c6c6c6"/></svg>
<div class="a th" style="left:1623px;top:303px;width:125px">λ<sub>dd</sub></div>
<svg class="a" style="left:1726px;top:304px" width="17" height="14" viewBox="0 0 17 14"><path d="M1.2 0 H15.65 V2.6 L10.42 7.2 V13.7 H6.55 V7.2 L1.2 2.6 Z" fill="#c6c6c6"/></svg>
<div class="a th" style="left:1748px;top:303px;width:125px">λ<sub>du</sub></div>
<svg class="a" style="left:1851px;top:304px" width="17" height="14" viewBox="0 0 17 14"><path d="M1.2 0 H15.65 V2.6 L10.42 7.2 V13.7 H6.55 V7.2 L1.2 2.6 Z" fill="#c6c6c6"/></svg>
<div class="a th" style="left:1874px;top:303px;width:29px;overflow:hidden;text-align:left;padding-left:6px">备注</div>
<div class="a cell" style="left:337px;top:374px;width:124px;padding:0 8px">温度传感器</div>
<div class="a cell" style="left:462px;top:374px;width:124px;padding:0 8px;letter-spacing:-0.4px">1</div>
<div class="a cell" style="left:587px;top:374px;width:124px;padding:0 8px">温度传感器提供电压信号，将温度信号进行转换</div>
<div class="a cell" style="left:712px;top:374px;width:149px;padding:0 8px;letter-spacing:-0.4px">0.027</div>
<div class="a cell" style="left:862px;top:374px;width:124px;padding:0 8px">信道1</div>
<div class="a cell" style="left:987px;top:374px;width:124px;padding:0 8px">未能提供电压信号</div>
<div class="a cell" style="left:1224px;top:374px;width:149px;padding:0 8px;letter-spacing:-0.4px">90</div>
<div class="a cell" style="left:1624px;top:374px;width:124px;padding:0 8px;letter-spacing:-0.4px">0.0000013122</div>
<div class="a cell" style="left:1749px;top:374px;width:124px;padding:0 8px;letter-spacing:-0.4px">1.458e-7</div>
<div class="a cell" style="left:337px;top:484px;width:124px;padding:0 8px">温度传感器</div>
<div class="a cell" style="left:462px;top:484px;width:124px;padding:0 8px;letter-spacing:-0.4px">1</div>
<div class="a cell" style="left:587px;top:484px;width:124px;padding:0 8px">温度传感器提供电压信号，将温度信号进行转换</div>
<div class="a cell" style="left:712px;top:484px;width:149px;padding:0 8px;letter-spacing:-0.4px">0.027</div>
<div class="a cell" style="left:862px;top:484px;width:124px;padding:0 8px">信道1</div>
<div class="a cell" style="left:987px;top:484px;width:124px;padding:0 8px">提供的电压信号太低</div>
<div class="a cell" style="left:1224px;top:484px;width:149px;padding:0 8px;letter-spacing:-0.4px">88</div>
<div class="a cell" style="left:1624px;top:484px;width:124px;padding:0 8px;letter-spacing:-0.4px">0.00000192456</div>
<div class="a cell" style="left:1749px;top:484px;width:124px;padding:0 8px;letter-spacing:-0.4px">2.6244e-7</div>
<div class="a cell" style="left:337px;top:594px;width:124px;padding:0 8px">温度传感器</div>
<div class="a cell" style="left:462px;top:594px;width:124px;padding:0 8px;letter-spacing:-0.4px">1</div>
<div class="a cell" style="left:587px;top:594px;width:124px;padding:0 8px">温度传感器提供电压信号，将温度信号进行转换</div>
<div class="a cell" style="left:712px;top:594px;width:149px;padding:0 8px;letter-spacing:-0.4px">0.027</div>
<div class="a cell" style="left:862px;top:594px;width:124px;padding:0 8px">信道1</div>
<div class="a cell" style="left:987px;top:594px;width:124px;padding:0 8px">提供的电压信号太高</div>
<div class="a cell" style="left:1224px;top:594px;width:149px;padding:0 8px;letter-spacing:-0.4px">90</div>
<div class="a cell" style="left:1624px;top:594px;width:124px;padding:0 8px;letter-spacing:-0.4px">0.0000019683</div>
<div class="a cell" style="left:1749px;top:594px;width:124px;padding:0 8px;letter-spacing:-0.4px">2.187e-7</div>
<div class="a cell" style="left:337px;top:666px;width:124px;padding:0 8px">速度传感器1</div>
<div class="a cell" style="left:462px;top:666px;width:124px;padding:0 8px;letter-spacing:-0.4px">1</div>
<div class="a cell" style="left:587px;top:666px;width:124px;padding:0 8px">速度传感器1提供脉冲频率信号</div>
<div class="a cell" style="left:712px;top:666px;width:149px;padding:0 8px;letter-spacing:-0.4px">0.25</div>
<div class="a cell" style="left:862px;top:666px;width:124px;padding:0 8px">信道1</div>
<div class="a cell" style="left:987px;top:666px;width:124px;padding:0 8px">提供太低的脉冲频率信号</div>
<div class="a cell" style="left:1224px;top:666px;width:149px;padding:0 8px;letter-spacing:-0.4px">90</div>
<div class="a cell" style="left:1624px;top:666px;width:124px;padding:0 8px;letter-spacing:-0.4px">0.000225</div>
<div class="a cell" style="left:1749px;top:666px;width:124px;padding:0 8px;letter-spacing:-0.4px">0.000025</div>
<div class="a cell" style="left:337px;top:738px;width:124px;padding:0 8px">速度传感器1</div>
<div class="a cell" style="left:462px;top:738px;width:124px;padding:0 8px;letter-spacing:-0.4px">1</div>
<div class="a cell" style="left:587px;top:738px;width:124px;padding:0 8px">速度传感器1提供脉冲频率信号</div>
<div class="a cell" style="left:712px;top:738px;width:149px;padding:0 8px;letter-spacing:-0.4px">0.25</div>
<div class="a cell" style="left:862px;top:738px;width:124px;padding:0 8px">信道1</div>
<div class="a cell" style="left:987px;top:738px;width:124px;padding:0 8px">未能提供准确的脉冲信号</div>
<div class="a cell" style="left:1224px;top:738px;width:149px;padding:0 8px;letter-spacing:-0.4px">90</div>
<div class="a cell" style="left:1374px;top:738px;width:124px;padding:0 8px;letter-spacing:-0.4px">5.625e-7</div>
<div class="a cell" style="left:1499px;top:738px;width:124px;padding:0 8px;letter-spacing:-0.4px">6.25e-8</div>
<div class="a cell" style="left:337px;top:810px;width:124px;padding:0 8px">速度传感器1</div>
<div class="a cell" style="left:462px;top:810px;width:124px;padding:0 8px;letter-spacing:-0.4px">1</div>
<div class="a cell" style="left:587px;top:810px;width:124px;padding:0 8px">速度传感器1提供脉冲频率信号</div>
<div class="a cell" style="left:712px;top:810px;width:149px;padding:0 8px;letter-spacing:-0.4px">0.25</div>
<div class="a cell" style="left:862px;top:810px;width:124px;padding:0 8px">信道1</div>
<div class="a cell" style="left:987px;top:810px;width:124px;padding:0 8px">提供太高的脉冲频率信号</div>
<div class="a cell" style="left:1224px;top:810px;width:149px;padding:0 8px;letter-spacing:-0.4px">90</div>
<div class="a cell" style="left:1624px;top:810px;width:124px;padding:0 8px;letter-spacing:-0.4px">0.0001125</div>
<div class="a cell" style="left:1749px;top:810px;width:124px;padding:0 8px;letter-spacing:-0.4px">0.0000125</div>
<div class="a" style="left:336px;top:877px;width:1568px;height:70px;border:1px solid #ddd;background:#fff"></div>
<div class="a" style="left:338px;top:877px;width:195px;height:33px;background:rgb(222,168,122)"></div>
<div class="a cell" style="left:338px;top:885px;width:195px;color:#222">危险故障失效率</div>
<div class="a cell" style="left:338px;top:920px;width:195px;color:#3f93e8;letter-spacing:-0.35px">0.000380832</div>
<div class="a" style="left:534px;top:877px;width:194px;height:33px;background:rgb(222,168,122)"></div>
<div class="a cell" style="left:534px;top:885px;width:194px;color:#222">Σλ</div>
<div class="a cell" style="left:534px;top:920px;width:194px;color:#3f93e8;letter-spacing:-0.35px">0.277</div>
<div class="a" style="left:729px;top:877px;width:195px;height:33px;background:rgb(222,168,122)"></div>
<div class="a cell" style="left:729px;top:885px;width:195px;color:#222">安全故障比例SFF</div>
<div class="a cell" style="left:729px;top:920px;width:195px;color:#3f93e8;letter-spacing:-0.35px">0.9998623576173286</div>
<div class="a" style="left:925px;top:877px;width:194px;height:33px;background:rgb(222,168,122)"></div>
<div class="a cell" style="left:925px;top:885px;width:194px;color:#222">检测率DC</div>
<div class="a cell" style="left:925px;top:920px;width:194px;color:#3f93e8;letter-spacing:-0.35px">0.8998851462062011</div>
<div class="a" style="left:1120px;top:877px;width:195px;height:33px;background:rgb(109,232,141)"></div>
<div class="a cell" style="left:1120px;top:885px;width:195px;color:#222">Σλsd</div>
<div class="a cell" style="left:1120px;top:920px;width:195px;color:#3f93e8;letter-spacing:-0.35px">5.625e-7</div>
<div class="a" style="left:1316px;top:877px;width:194px;height:33px;background:rgb(139,180,203)"></div>
<div class="a cell" style="left:1316px;top:885px;width:194px;color:#222">Σλsu</div>
<div class="a cell" style="left:1316px;top:920px;width:194px;color:#3f93e8;letter-spacing:-0.35px">6.25e-8</div>
<div class="a" style="left:1511px;top:877px;width:195px;height:33px;background:rgb(233,146,130)"></div>
<div class="a cell" style="left:1511px;top:885px;width:195px;color:#222">Σλdd</div>
<div class="a cell" style="left:1511px;top:920px;width:195px;color:#3f93e8;letter-spacing:-0.35px">0.00034270506</div>
<div class="a" style="left:1707px;top:877px;width:195px;height:33px;background:rgb(238,234,176)"></div>
<div class="a cell" style="left:1707px;top:885px;width:195px;color:#222">Σλdu</div>
<div class="a cell" style="left:1707px;top:920px;width:195px;color:#3f93e8;letter-spacing:-0.35px">0.00003812694</div>
<div class="a vl" style="left:337px;top:877px;height:69px"></div>
<div class="a vl" style="left:533px;top:877px;height:69px"></div>
<div class="a vl" style="left:728px;top:877px;height:69px"></div>
<div class="a vl" style="left:924px;top:877px;height:69px"></div>
<div class="a vl" style="left:1119px;top:877px;height:69px"></div>
<div class="a vl" style="left:1315px;top:877px;height:69px"></div>
<div class="a vl" style="left:1510px;top:877px;height:69px"></div>
<div class="a vl" style="left:1706px;top:877px;height:69px"></div>
<div class="a vl" style="left:1902px;top:877px;height:69px"></div>
<div class="a" style="left:337px;top:910px;width:1566px;height:2px;background:#ddd"></div>
</body></html>
